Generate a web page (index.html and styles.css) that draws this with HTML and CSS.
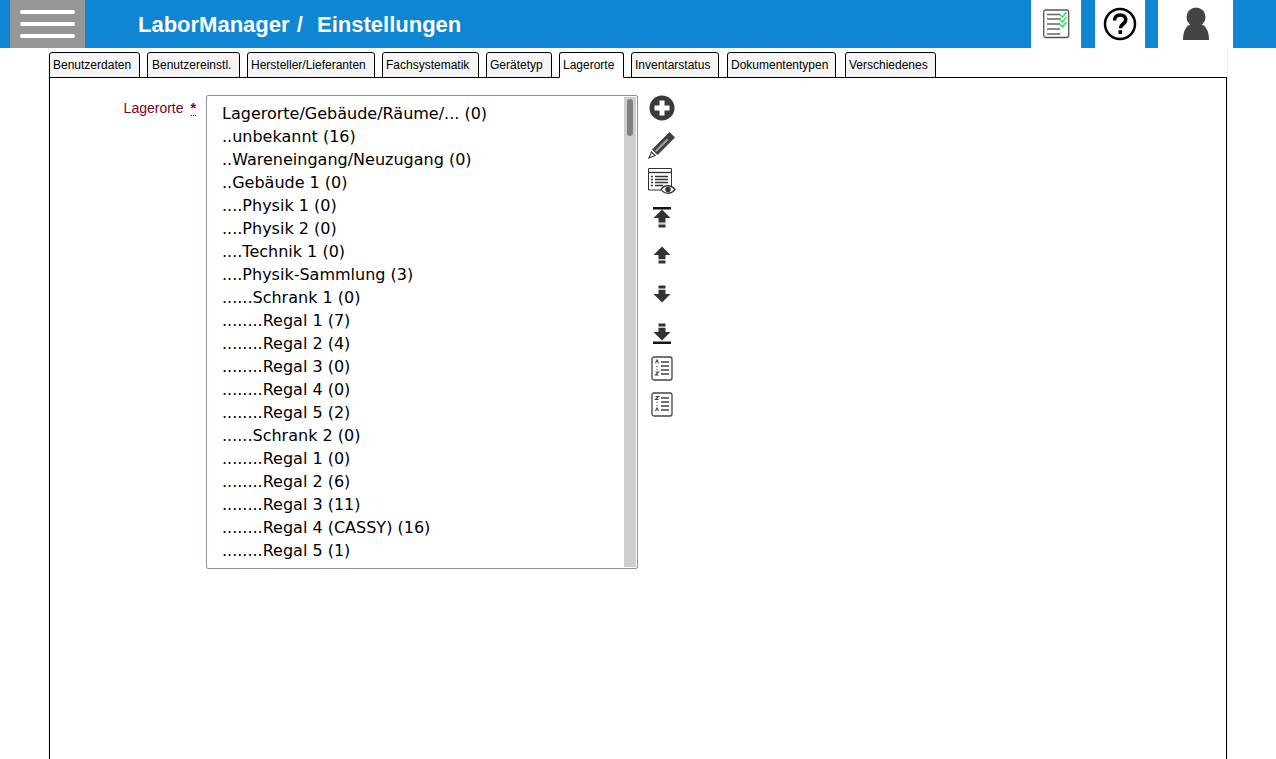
FILE: index.html
```html
<!DOCTYPE html>
<html lang="de">
<head>
    <meta charset="UTF-8">
    <title>LaborManager / Einstellungen</title>
    <link rel="stylesheet" href="styles.css">
</head>
<body>

    <!-- Header -->
    <header class="topbar">
        <button class="menu-btn"><span></span><span></span><span></span></button>
        <h1 class="title">LaborManager&nbsp;/&nbsp; Einstellungen</h1>
        <div class="top-icon tasks">
            <svg width="27" height="30" viewBox="0 0 27 30">
                <rect x=".7" y="1" width="25" height="27.500" rx="2" fill="#fff" stroke="#555" stroke-width="1.300"/>
                <path d="M4 5.500h13M4 10h14M4 15h13M4 20h13M4 25h13" stroke="#666" stroke-width="1.300" fill="none"/>
                <path d="M17 5.500l2.500 2.500 4-5M17 10.500l2.500 2.500 4-5M17 15.500l2.500 2.500 4-5" stroke="#2ee65a" stroke-width="1.600" fill="none"/>
            </svg>
        </div>
        <div class="top-icon help">
            <svg width="34" height="34" viewBox="0 0 34 34">
                <circle cx="17" cy="17" r="15" fill="#fff" stroke="#000" stroke-width="2.500"/>
                <path d="M11.500 13.500c0-3.500 2.500-5.500 5.700-5.500 3.300 0 5.600 2 5.600 4.800 0 4.200-5.400 4.200-5.400 8.400" fill="none" stroke="#000" stroke-width="3.600"/>
                <rect x="15.500" y="23.300" width="3.600" height="3.600" fill="#000"/>
            </svg>
        </div>
        <div class="top-icon user">
            <svg width="28" height="34" viewBox="0 0 28 34">
                <circle cx="14" cy="10" r="9.500" fill="#444"/>
                <path d="M1 33c0-9 3-14 8-16h10c5 2 8 7 8 16z" fill="#444"/>
            </svg>
        </div>
    </header>

    <main class="content">
        <nav class="tabs">
            <a class="tab w-1">Benutzerdaten</a>
            <a class="tab w-2">Benutzereinstl.</a>
            <a class="tab w-3">Hersteller/Lieferanten</a>
            <a class="tab w-4">Fachsystematik</a>
            <a class="tab w-5">Gerätetyp</a>
            <a class="tab w-6 active">Lagerorte</a>
            <a class="tab w-7">Inventarstatus</a>
            <a class="tab w-8">Dokumententypen</a>
            <a class="tab w-9">Verschiedenes</a>
        </nav>

        <section class="panel">
            <label class="field-label">Lagerorte<span class="required">*</span></label>

            <div class="listbox">
                <ul class="list">
                    <li>Lagerorte/Gebäude/Räume/... (0)</li>
                    <li>..unbekannt (16)</li>
                    <li>..Wareneingang/Neuzugang (0)</li>
                    <li>..Gebäude 1 (0)</li>
                    <li>....Physik 1 (0)</li>
                    <li>....Physik 2 (0)</li>
                    <li>....Technik 1 (0)</li>
                    <li>....Physik-Sammlung (3)</li>
                    <li>......Schrank 1 (0)</li>
                    <li>........Regal 1 (7)</li>
                    <li>........Regal 2 (4)</li>
                    <li>........Regal 3 (0)</li>
                    <li>........Regal 4 (0)</li>
                    <li>........Regal 5 (2)</li>
                    <li>......Schrank 2 (0)</li>
                    <li>........Regal 1 (0)</li>
                    <li>........Regal 2 (6)</li>
                    <li>........Regal 3 (11)</li>
                    <li>........Regal 4 (CASSY) (16)</li>
                    <li>........Regal 5 (1)</li>
                </ul>
                <div class="scrollbar"><div class="thumb"></div></div>
            </div>

            <!-- Toolbar -->
            <div class="tools">
                <svg width="26" height="26" viewBox="0 0 26 26">
                    <circle cx="13" cy="13" r="12.500" fill="#3a3a3a"/>
                    <path d="M13 5.500v15M5.500 13h15" stroke="#fff" stroke-width="5"/>
                </svg>
                <svg width="28" height="28" viewBox="0 0 28 28">
                    <path d="M21.500 1l5.500 5.500L9.500 24 4 18.500z" fill="#3f3f3f"/>
                    <path d="M19 7.500l1.500 1.500L8.500 21 7 19.500z" fill="#a0a0a0"/>
                    <path d="M3.500 21L7 24.500 1 27z" fill="#fff" stroke="#444" stroke-width="1.200"/>
                </svg>
                <svg width="28" height="26" viewBox="0 0 28 26">
                    <path d="M.5 22V.5h23V18" fill="#fff" stroke="#333"/>
                    <path d="M.5 22H13" stroke="#333"/>
                    <path d="M1 4.500h22" stroke="#333" stroke-width="1.400"/>
                    <path d="M7 8.500h13M7 11.500h13M7 14.500h13M7 17.500h8M3 8.500h2M3 11.500h2M3 14.500h2M3 17.500h2" stroke="#333" stroke-width="1.500"/>
                    <path d="M13 21.500c3.500-5 10-5 14 0-4 5-10.500 5-14 0z" fill="#fff" stroke="#333" stroke-width="1.300"/>
                    <circle cx="20" cy="21.500" r="2.700" fill="#333"/>
                </svg>
                <svg width="20" height="21" viewBox="0 0 20 21">
                    <path d="M1 1.200h18" stroke="#111" stroke-width="2.600"/>
                    <path d="M10 2.500l8.500 8.500h-5v4.500h-7V11h-5z" fill="#333"/>
                    <path d="M6.500 16.500h7V18h-7z" fill="#999"/>
                    <path d="M6.500 18h7v2.500h-7z" fill="#333"/>
                </svg>
                <svg width="20" height="18" viewBox="0 0 20 18">
                    <path d="M10 .5L18.500 9h-5v4h-7V9h-5z" fill="#333"/>
                    <path d="M6.500 13.500h7V15h-7z" fill="#999"/>
                    <path d="M6.500 15h7v2.500h-7z" fill="#333"/>
                </svg>
                <svg width="20" height="18" viewBox="0 0 20 18">
                    <path d="M6.500.5h7V3h-7z" fill="#333"/>
                    <path d="M6.500 3h7v1.500h-7z" fill="#999"/>
                    <path d="M6.500 5h7v4h5L10 17.500 1.500 9h5z" fill="#333"/>
                </svg>
                <svg width="20" height="21" viewBox="0 0 20 21">
                    <path d="M6.500.5h7V3h-7z" fill="#333"/>
                    <path d="M6.500 3h7v1.500h-7z" fill="#999"/>
                    <path d="M6.500 5h7v4h5L10 17.500 1.500 9h5z" fill="#333"/>
                    <path d="M1 19.800h18" stroke="#111" stroke-width="2.600"/>
                </svg>
                <svg width="22" height="25" viewBox="0 0 22 25">
                    <rect x="1" y="1" width="20" height="23" rx="2" fill="#fff" stroke="#444" stroke-width="1.300"/>
                    <path d="M10 6h8M10 10h8M10 14h8M10 18h8" stroke="#444" stroke-width="1.300"/>
                    <path d="M4.500 7l1.500-3 1.500 3M6 10v1M6 13v1M4.500 16h3l-3 3h3" stroke="#444" stroke-width="1.100" fill="none"/>
                </svg>
                <svg width="22" height="25" viewBox="0 0 22 25">
                    <rect x="1" y="1" width="20" height="23" rx="2" fill="#fff" stroke="#444" stroke-width="1.300"/>
                    <path d="M10 6h8M10 10h8M10 14h8M10 18h8" stroke="#444" stroke-width="1.300"/>
                    <path d="M4.500 4.500h3l-3 3h3M6 10v1M6 13v1M4.500 19l1.500-3 1.500 3" stroke="#444" stroke-width="1.100" fill="none"/>
                </svg>
            </div>
        </section>
    </main>

</body>
</html>
```

FILE: styles.css
```css
/* General Styles */
html, body {
    height: 100%;
}

body {
    margin: 0;
    overflow: hidden;
    background: white;
    font-family: "Liberation Sans", Arial, sans-serif;
    display: flex;
    flex-direction: column;
}

/* Header */
.topbar {
    height: 48px;
    flex: none;
    background-color: #0e86d4;
    display: flex;
    align-items: stretch;
    padding-left: 10px;
}

.menu-btn {
    width: 75px;
    padding: 0;
    border: none;
    background-color: #969696;
    display: flex;
    flex-direction: column;
    align-items: center;
    justify-content: center;
    gap: 8px;
}

.menu-btn span {
    display: block;
    width: 55px;
    height: 4px;
    background: white;
    border-radius: 2px;
}

.title {
    margin: 0 0 0 53px;
    flex: 1;
    color: white;
    font-size: 22px;
    font-weight: bold;
    line-height: 49px;
    word-spacing: 1px;
}

.top-icon {
    background: white;
    display: flex;
    align-items: center;
    justify-content: center;
}

.tasks {
    width: 50px;
}

.help {
    width: 50px;
    margin-left: 14px;
}

.user {
    width: 75px;
    margin-left: 13px;
    margin-right: 43px;
}

/* Tabs and panel */
.content {
    flex: 1;
    margin: 0 48px;
    border-left: 1px solid #f0f0f0;
    border-right: 1px solid #f0f0f0;
    display: flex;
    flex-direction: column;
}

.tabs {
    display: flex;
    gap: 7px;
    padding-top: 4px;
    position: relative;
    z-index: 1;
    margin-bottom: -1px;
}

.tab {
    box-sizing: border-box;
    height: 26px;
    padding: 0 0 0 3px;
    border: 1px solid #000;
    border-radius: 3px 3px 0 0;
    background-color: #f5f5f5;
    color: #000;
    font-size: 12px;
    line-height: 25px;
    white-space: nowrap;
}

.tab.active {
    background-color: white;
    border-bottom-color: white;
}

.w-1 { width: 91px; }
.w-2 { width: 93px; padding-left: 4px; }
.w-3 { width: 128px; }
.w-4 { width: 97px; }
.w-5 { width: 66px; }
.w-6 { width: 65px; }
.w-7 { width: 88px; margin-right: 1px; }
.w-8 { width: 109px; margin-right: 2px; }
.w-9 { width: 91px; }

.panel {
    flex: 1;
    border: 1px solid #000;
    border-bottom: none;
    display: flex;
    align-items: flex-start;
    padding-top: 17px;
}

.field-label {
    width: 146px;
    flex: none;
    text-align: right;
    color: #800028;
    font-size: 14px;
    line-height: 26px;
}

.required {
    display: inline-block;
    margin-left: 7px;
    border-bottom: 1px dotted #800028;
    font-weight: bold;
    line-height: 14px;
}

/* List box */
.listbox {
    box-sizing: border-box;
    width: 432px;
    height: 474px;
    margin-left: 10px;
    border: 1px solid #8f8f9d;
    border-radius: 2px;
    padding: 1px;
    display: flex;
    justify-content: space-between;
}

.list {
    list-style: none;
    margin: 0;
    padding: 5px 0 0 14px;
    font-family: "DejaVu Sans", sans-serif;
    font-size: 16px;
    line-height: 23px;
    color: #000;
}

.scrollbar {
    width: 12px;
    background-color: #cdcdcd;
    padding: 2px 3px;
    box-sizing: border-box;
}

.thumb {
    height: 37px;
    background-color: #808080;
    border-radius: 3px;
}

/* Toolbar */
.tools {
    width: 28px;
    margin: -5px 0 0 10px;
    display: grid;
    justify-items: center;
    align-items: center;
    grid-template-rows: 36px 38px 34px 38px 38px 40px 38px 32px 40px;
}
```
